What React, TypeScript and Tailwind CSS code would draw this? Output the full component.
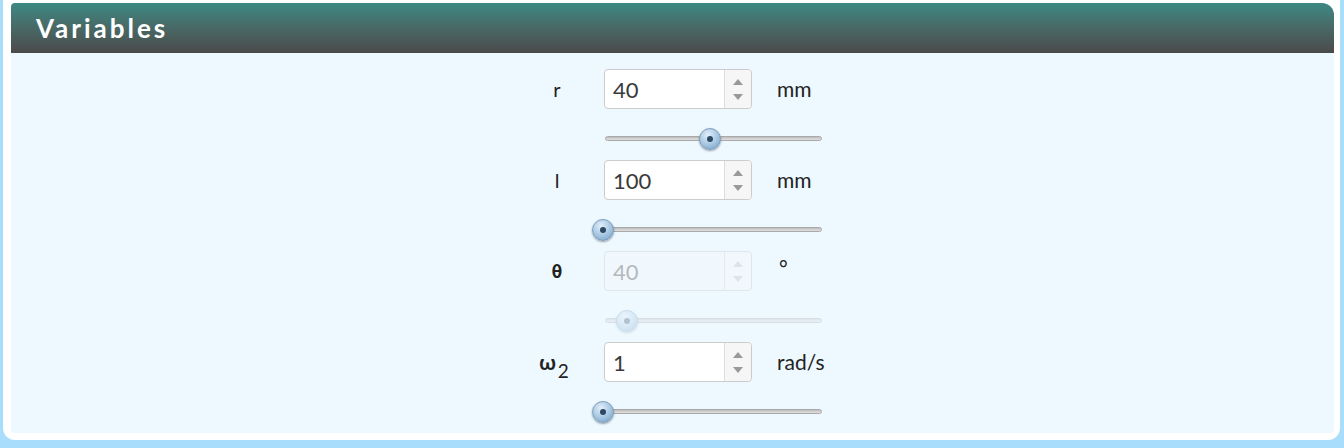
import React from "react";

type Row = {
  label: React.ReactNode;
  value: string;
  unit: string;
  pct: number;
  disabled?: boolean;
};

const rows: Row[] = [
  { label: "r", value: "40", unit: "mm", pct: 0.49 },
  { label: "l", value: "100", unit: "mm", pct: 0 },
  {
    label: <span className="font-bold font-['DejaVu_Sans_Mono',monospace] text-[18px]">θ</span>,
    value: "40",
    unit: "°",
    pct: 0.11,
    disabled: true,
  },
  {
    label: (
      <span className="-ml-[6px] text-[21px] font-bold">
        ω<sub className="ml-[2px] align-[-3px] text-[19px] font-normal">2</sub>
      </span>
    ),
    value: "1",
    unit: "rad/s",
    pct: 0,
  },
];

function Spinner({ value, disabled }: { value: string; disabled?: boolean }) {
  return (
    <div
      className={
        "flex h-[40px] w-[148px] rounded-[4px] border " +
        (disabled ? "border-[#dfe6ec] bg-[#f1f8fd]" : "border-[#cccccc] bg-white")
      }
    >
      <div
        className={
          "flex flex-1 items-center pl-[8px] text-[22px] " +
          (disabled ? "text-[#b5b9bd]" : "text-[#3a3a3a]")
        }
      >
        {value}
      </div>
      <div
        className={
          "flex w-[27px] flex-col items-center justify-center gap-[9px] rounded-r-[4px] border-l " +
          (disabled ? "border-[#e3e9ee] bg-[#f1f7fb]" : "border-[#dddddd] bg-[#f6f6f6]")
        }
      >
        <span
          className={
            "h-0 w-0 border-x-[5px] border-b-[6px] border-x-transparent " +
            (disabled ? "border-b-[#dde3e8]" : "border-b-[#999999]")
          }
        />
        <span
          className={
            "h-0 w-0 border-x-[5px] border-t-[6px] border-x-transparent " +
            (disabled ? "border-t-[#dde3e8]" : "border-t-[#999999]")
          }
        />
      </div>
    </div>
  );
}

function Slider({ pct, disabled }: { pct: number; disabled?: boolean }) {
  return (
    <div className={"relative h-[22px] w-[218px] " + (disabled ? "opacity-30" : "")}>
      <div className="absolute left-[1px] right-0 top-[8px] h-[5px] rounded-full border border-[#a9a9a9] bg-gradient-to-b from-[#bdbdbd] to-[#e2e2e2]" />
      <div
        className="absolute top-0 -ml-[12px] flex h-[22px] w-[22px] items-center justify-center rounded-full border border-[#7e9fbc] bg-[radial-gradient(circle_at_40%_30%,#e2effa,#9dc0de_60%,#6f98bd)] shadow-[0_1px_2px_rgba(0,0,0,0.35)]"
        style={{ left: `${pct * 218}px` }}
      >
        <span className="h-[6px] w-[6px] rounded-full bg-[#2c4a66]" />
      </div>
    </div>
  );
}

export default function App() {
  return (
    <div className="h-[448px] w-[1344px] overflow-hidden bg-[#a8defc] font-['Lato',sans-serif]">
      <div className="ml-[3px] mr-[4px] rounded-b-[12px] bg-white pb-[7px] pl-[8px] pr-[6px] pt-[3px]">
        <div className="flex h-[50px] items-center rounded-tl-[4px] rounded-tr-[12px] bg-gradient-to-b from-[#3b8883] to-[#4a4a4a] pl-[25px] pt-[1px]">
          <span className="text-[26px] font-bold tracking-[3px] text-white">Variables</span>
        </div>
        <div className="h-[380px] rounded-b-[4px] bg-[#edf8ff] pt-[16px]">
          <div className="ml-[517px] grid grid-cols-[60px_148px_auto] gap-x-[16px]">
            {rows.map((row, i) => (
              <React.Fragment key={i}>
                <div className="flex h-[40px] items-center justify-center pr-[2px] text-[20px] text-[#222]">
                  {row.label}
                </div>
                <Spinner value={row.value} disabled={row.disabled} />
                <div
                  className={
                    "flex h-[40px] pl-[9px] text-[21px] text-[#222] " +
                    (row.unit === "°" ? "items-start pl-[11px] pt-[1px]" : "items-center")
                  }
                >
                  {row.unit}
                </div>
                <div />
                <div className="col-span-2 h-[51px] pt-[19px]">
                  <Slider pct={row.pct} disabled={row.disabled} />
                </div>
              </React.Fragment>
            ))}
          </div>
        </div>
      </div>
    </div>
  );
}
